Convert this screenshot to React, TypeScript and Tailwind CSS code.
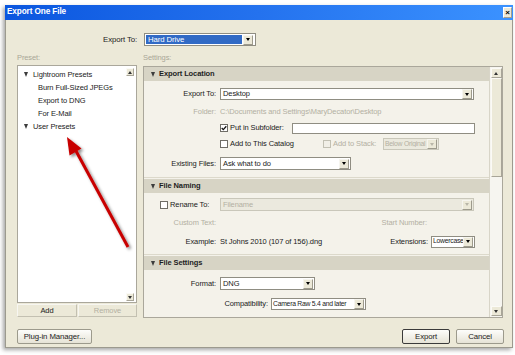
import React from "react";

function DropArrow({ disabled }: { disabled?: boolean }) {
  return (
    <div className="w-[10px] h-[10px] bg-[#ece9d8] border border-[#9d9a8c] border-t-[#f6f5ef] border-l-[#f6f5ef] flex items-center justify-center mr-[1px] shrink-0">
      <div
        className={
          disabled
            ? "w-0 h-0 border-l-[2.5px] border-r-[2.5px] border-t-[3px] border-l-transparent border-r-transparent border-t-[#b9b6a8]"
            : "w-0 h-0 border-l-[2.5px] border-r-[2.5px] border-t-[3px] border-l-transparent border-r-transparent border-t-black"
        }
      />
    </div>
  );
}

function Select({
  className,
  text,
  disabled,
  tight,
}: {
  className: string;
  text: string;
  disabled?: boolean;
  tight?: boolean;
}) {
  return (
    <div
      className={
        (disabled
          ? "bg-[#ebe9de] border-[#c9c7ba] text-[#b3b0a2] "
          : "bg-white border-[#8f8d82] text-[#1a1a1a] ") +
        "border flex items-center shrink-0 " +
        className
      }
    >
      <span
        className={
          (tight ? "text-[6.8px] tracking-[-0.25px] pl-[1px] " : "pl-[2px] ") +
          "flex-1 whitespace-nowrap overflow-hidden leading-none"
        }
      >
        {text}
      </span>
      <DropArrow disabled={disabled} />
    </div>
  );
}

function Check({ checked, disabled }: { checked?: boolean; disabled?: boolean }) {
  return (
    <div
      className={
        (disabled ? "border-[#c2c0b3] bg-[#f1efe7] " : "border-[#6f6d66] bg-white ") +
        "w-[8px] h-[8px] border flex items-center justify-center shrink-0"
      }
    >
      {checked && (
        <svg width="6" height="6" viewBox="0 0 6 6">
          <path d="M0.7 3 L2.3 4.6 L5.3 1.2" stroke="#111" strokeWidth="1.3" fill="none" />
        </svg>
      )}
    </div>
  );
}

function Tri() {
  return (
    <div className="w-0 h-0 border-l-[2.5px] border-r-[2.5px] border-t-[5px] border-l-transparent border-r-transparent shrink-0 border-t-[#3c3c3c]" />
  );
}

function Header({ title }: { title: string }) {
  return (
    <div className="h-[14px] bg-[#d7d4c5] flex items-center pl-[7px] shrink-0">
      <Tri />
      <span className="ml-[4px] font-bold text-[7.5px] text-[#1e1e1e]">{title}</span>
    </div>
  );
}

function Label({ children, gray }: { children: React.ReactNode; gray?: boolean }) {
  return (
    <div
      className={
        (gray ? "text-[#b3b0a2] " : "text-[#222] ") +
        "w-[72px] mr-[4px] text-right whitespace-nowrap shrink-0"
      }
    >
      {children}
    </div>
  );
}

function ScrollBtn({ up, small }: { up?: boolean; small?: boolean }) {
  return (
    <div
      className={
        (small ? "w-[8px] h-[8px] " : "w-[11px] h-[10px] ") +
        "bg-[#ece9d8] border border-[#a8a598] border-t-[#fbfaf6] border-l-[#fbfaf6] flex items-center justify-center shrink-0"
      }
    >
      <div
        className={
          up
            ? "w-0 h-0 border-l-[2px] border-r-[2px] border-b-[3px] border-l-transparent border-r-transparent border-b-[#333]"
            : "w-0 h-0 border-l-[2px] border-r-[2px] border-t-[3px] border-l-transparent border-r-transparent border-t-[#333]"
        }
      />
    </div>
  );
}

export default function App() {
  return (
    <div className="relative w-[515px] h-[355px] bg-white overflow-hidden pl-[5px] pt-[5px] font-['Liberation_Sans',Arial,sans-serif] text-[7.5px] tracking-[-0.1px] text-[#1a1a1a] leading-none">
      {/* window */}
      <div className="w-[508px] h-[343px] flex flex-col shadow-[-2px_2px_4px_rgba(0,0,0,0.35)]">
        {/* title bar */}
        <div className="h-[15px] shrink-0 bg-gradient-to-r from-[#0a56df] via-[#2472ee] to-[#3b92ff] flex items-center justify-between pl-[2px] pr-[1px]">
          <span className="text-white font-bold text-[8.2px]">Export One File</span>
          <div className="w-[9px] h-[11px] bg-[#ece9d8] border border-[#a29f92] border-t-white border-l-white flex items-center justify-center">
            <span className="text-black font-bold text-[8px] leading-none">×</span>
          </div>
        </div>
        {/* body */}
        <div className="flex-1 bg-[#ece9d8] border-l border-r border-b border-[#9c9a8e] pl-[11px] pr-[8px] pt-[13px] flex flex-col">
          {/* export to row */}
          <div className="h-[13px] flex items-center shrink-0">
            <div className="w-[120px] text-right text-[7.8px] text-[#222]">Export To:</div>
            <div className="ml-[7px] w-[112px] h-[13px] bg-white border border-[#8f8d82] flex items-center p-[1px]">
              <div className="flex-1 h-full bg-[#316ac5] text-white flex items-center pl-[2px] text-[7.8px]">Hard Drive</div>
              <div className="ml-[1px]">
                <DropArrow />
              </div>
            </div>
          </div>
          {/* labels */}
          <div className="mt-[6px] h-[12px] flex items-center shrink-0 text-[#a9a797]">
            <div className="w-[126px]">Preset:</div>
            <div>Settings:</div>
          </div>
          {/* panels */}
          <div className="mt-[1px] h-[253px] flex gap-[6px] shrink-0">
            {/* preset column */}
            <div className="w-[120px] flex flex-col">
              <div className="h-[238px] border border-[#aaa79b] bg-white flex">
                <div className="flex-1 pt-[2px] text-[7.5px] text-[#222]">
                  <div className="h-[13px] flex items-center pl-[6px]">
                    <Tri />
                    <span className="ml-[5px]">Lightroom Presets</span>
                  </div>
                  <div className="h-[13px] flex items-center pl-[20px]">Burn Full-Sized JPEGs</div>
                  <div className="h-[13px] flex items-center pl-[20px]">Export to DNG</div>
                  <div className="h-[13px] flex items-center pl-[20px]">For E-Mail</div>
                  <div className="h-[13px] flex items-center pl-[6px]">
                    <Tri />
                    <span className="ml-[5px]">User Presets</span>
                  </div>
                </div>
                <div className="w-[10px] flex flex-col justify-between pt-[2px] pb-[1px] pr-[1px]">
                  <ScrollBtn up small />
                  <ScrollBtn small />
                </div>
              </div>
              <div className="mt-[1px] h-[13px] flex gap-[1px]">
                <div className="w-[60px] bg-[#ece9d8] border border-[#c3c0b1] border-t-[#f7f6f1] border-l-[#f7f6f1] flex items-center justify-center text-[#222]">
                  Add
                </div>
                <div className="flex-1 bg-[#ece9d8] border border-[#c3c0b1] border-t-[#f7f6f1] border-l-[#f7f6f1] flex items-center justify-center text-[#b3b0a2]">
                  Remove
                </div>
              </div>
            </div>
            {/* settings panel */}
            <div className="mt-[1px] h-[252px] w-[360px] border border-[#aaa79b] bg-[#f4f2ea] flex">
              <div className="flex-1 flex flex-col overflow-hidden">
                <Header title="Export Location" />
                <div className="h-[97px] border-b border-[#dcd9cb] shrink-0 flex flex-col">
                  <div className="mt-[7px] h-[12px] flex items-center">
                    <Label>Export To:</Label>
                    <Select className="w-[254px] h-[12px]" text="Desktop" />
                  </div>
                  <div className="mt-[6px] h-[12px] flex items-center text-[#b3b0a2]">
                    <Label gray>Folder:</Label>
                    <span className="whitespace-nowrap">C:\Documents and Settings\MaryDecator\Desktop</span>
                  </div>
                  <div className="mt-[4px] h-[12px] flex items-center">
                    <div className="w-[76px] shrink-0" />
                    <div className="w-[72px] flex items-center shrink-0">
                      <Check checked />
                      <span className="ml-[2px] whitespace-nowrap">Put in Subfolder:</span>
                    </div>
                    <div className="w-[183px] h-[11px] bg-white border border-[#8f8d82]" />
                  </div>
                  <div className="mt-[4px] h-[12px] flex items-center">
                    <div className="w-[76px] shrink-0" />
                    <div className="w-[103px] flex items-center shrink-0">
                      <Check />
                      <span className="ml-[2px] whitespace-nowrap">Add to This Catalog</span>
                    </div>
                    <div className="w-[60px] flex items-center shrink-0 text-[#b3b0a2]">
                      <Check disabled />
                      <span className="ml-[2px] whitespace-nowrap">Add to Stack:</span>
                    </div>
                    <Select className="w-[56px] h-[12px]" text="Below Original" disabled tight />
                  </div>
                  <div className="mt-[7px] h-[13px] flex items-center">
                    <Label>Existing Files:</Label>
                    <Select className="w-[131px] h-[13px]" text="Ask what to do" />
                  </div>
                </div>
                <div className="mt-[1px]">
                  <Header title="File Naming" />
                </div>
                <div className="h-[62px] border-b border-[#dcd9cb] shrink-0 flex flex-col">
                  <div className="mt-[5px] h-[13px] flex items-center">
                    <div className="w-[76px] shrink-0 flex items-center pl-[16px]">
                      <Check />
                      <span className="ml-[2px] whitespace-nowrap">Rename To:</span>
                    </div>
                    <Select className="w-[254px] h-[13px]" text="Filename" disabled />
                  </div>
                  <div className="mt-[6px] h-[12px] flex items-center text-[#b3b0a2]">
                    <Label gray>Custom Text:</Label>
                    <div className="w-[207px] text-right whitespace-nowrap">Start Number:</div>
                  </div>
                  <div className="mt-[6px] h-[13px] flex items-center">
                    <Label>Example:</Label>
                    <div className="w-[255px] flex items-center justify-between">
                      <span className="whitespace-nowrap">St Johns 2010 (107 of 156).dng</span>
                      <div className="flex items-center">
                        <span className="mr-[3px] whitespace-nowrap">Extensions:</span>
                        <Select className="w-[44px] h-[12px]" text="Lowercase" tight />
                      </div>
                    </div>
                  </div>
                </div>
                <div className="mt-[1px]">
                  <Header title="File Settings" />
                </div>
                <div className="flex flex-col">
                  <div className="mt-[7px] h-[13px] flex items-center">
                    <Label>Format:</Label>
                    <Select className="w-[95px] h-[13px]" text="DNG" />
                  </div>
                  <div className="mt-[8px] h-[12px] flex items-center">
                    <div className="w-[124px] mr-[3px] text-right shrink-0">Compatibility:</div>
                    <Select className="w-[95px] h-[12px]" text="Camera Raw 5.4 and later" tight />
                  </div>
                </div>
              </div>
              {/* scrollbar */}
              <div className="w-[13px] border-l border-[#d8d5c8] bg-[#f6f5f0] flex flex-col items-center pt-[1px] pb-[1px]">
                <ScrollBtn up />
                <div className="w-[11px] h-[99px] bg-[#ece9d8] border border-[#a8a598] border-t-[#fbfaf6] border-l-[#fbfaf6]" />
                <div className="flex-1" />
                <ScrollBtn />
              </div>
            </div>
          </div>
          {/* bottom buttons */}
          <div className="mt-[11px] h-[15px] flex justify-between shrink-0">
            <div className="w-[75px] h-[15px] rounded-[2px] border border-[#9c9a8c] bg-gradient-to-b from-[#fdfdfb] to-[#e6e3d6] flex items-center justify-center text-[#222] text-[7.8px]">
              Plug-in Manager...
            </div>
            <div className="flex gap-[6px]">
              <div className="w-[48px] h-[15px] rounded-[2px] border border-[#3a3a3a] bg-gradient-to-b from-[#fdfdfb] to-[#e6e3d6] flex items-center justify-center text-[#222] text-[7.8px]">
                Export
              </div>
              <div className="w-[48px] h-[15px] rounded-[2px] border border-[#9c9a8c] bg-gradient-to-b from-[#fdfdfb] to-[#e6e3d6] flex items-center justify-center text-[#222] text-[7.8px]">
                Cancel
              </div>
            </div>
          </div>
        </div>
      </div>
      {/* red annotation arrow */}
      <svg className="absolute left-0 top-0 pointer-events-none" width="515" height="355" viewBox="0 0 515 355">
        <defs>
          <filter id="sh" x="-50%" y="-50%" width="200%" height="200%">
            <feDropShadow dx="2" dy="2" stdDeviation="1.5" floodColor="#000" floodOpacity="0.45" />
          </filter>
        </defs>
        <g filter="url(#sh)">
          <line x1="128" y1="247" x2="76" y2="151" stroke="#c80000" strokeWidth="3" />
          <polygon points="67,137 81.5,148.5 69.5,155.5" fill="#c80000" />
        </g>
      </svg>
    </div>
  );
}
